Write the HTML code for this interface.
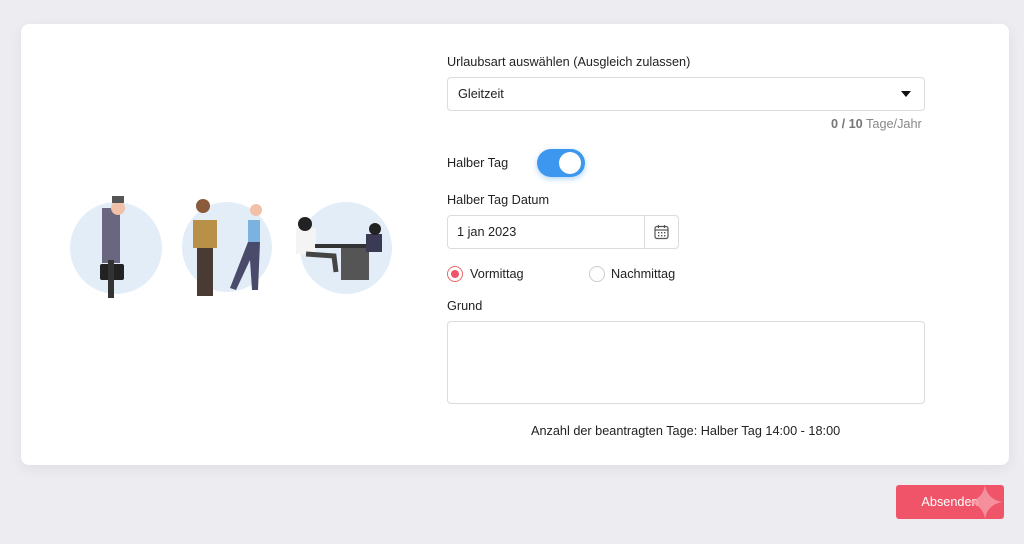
<!DOCTYPE html>
<html><head><meta charset="utf-8"><style>
*{box-sizing:border-box;margin:0;padding:0}
body{width:1024px;height:544px;background:#ececf1;font-family:"Liberation Sans",sans-serif;color:#222;position:relative;overflow:hidden}
.card{position:absolute;left:21px;top:24px;width:988px;height:441px;background:#fff;border-radius:8px;box-shadow:0 4px 14px rgba(0,0,0,.06)}
.t{position:absolute;font-size:12.7px;color:#222}
.box{position:absolute;border:1px solid #dcdcdc;border-radius:4px;background:#fff}
.btn{position:absolute;left:896px;top:485px;width:108px;height:34px;background:#ef5468;border-radius:3px;color:#fff;font-size:12.7px;text-align:center;line-height:34px;overflow:hidden}
</style></head><body>
<div class="card"></div>
<svg style="position:absolute;left:60px;top:180px" width="340" height="130">
<circle cx="56" cy="68" r="46" fill="#e3edf8"/>
<circle cx="167" cy="67" r="45" fill="#e3edf8"/>
<circle cx="286" cy="68" r="46" fill="#e3edf8"/>
<rect x="42" y="28" width="18" height="55" fill="#6a6680"/>
<circle cx="58" cy="28" r="7" fill="#f0c0a8"/>
<rect x="52" y="16" width="12" height="7" fill="#555"/>
<rect x="40" y="84" width="24" height="16" rx="2" fill="#222"/>
<rect x="48" y="80" width="6" height="38" fill="#333"/>
<rect x="133" y="40" width="24" height="28" fill="#b89048"/>
<circle cx="143" cy="26" r="7" fill="#8a5a3a"/>
<rect x="137" y="68" width="16" height="48" fill="#4a3a34"/>
<rect x="188" y="40" width="12" height="22" fill="#7ab2e0"/>
<circle cx="196" cy="30" r="6" fill="#f0c0a8"/>
<path d="M188 62 L200 62 L198 110 L192 110 L190 80 L176 110 L170 108 Z" fill="#4a4a6a"/>
<rect x="236" y="48" width="20" height="26" fill="#f4f4f4"/>
<circle cx="245" cy="44" r="7" fill="#222"/>
<rect x="255" y="64" width="60" height="4" fill="#333"/>
<rect x="281" y="68" width="28" height="32" fill="#555"/>
<rect x="306" y="54" width="16" height="18" fill="#3a3a55"/>
<circle cx="315" cy="49" r="6" fill="#222"/>
<path d="M246 74 L274 76 L276 92" stroke="#444" stroke-width="5" fill="none"/>
</svg>
<div class="t" style="left:447px;top:55px">Urlaubsart auswählen (Ausgleich zulassen)</div>
<div class="box" style="left:447px;top:77px;width:478px;height:34px"></div>
<div class="t" style="left:458px;top:87px">Gleitzeit</div>
<div style="position:absolute;left:901px;top:91px;width:0;height:0;border-left:5px solid transparent;border-right:5px solid transparent;border-top:6px solid #111"></div>
<div class="t" style="left:831px;top:117px;color:#888"><b style="color:#777">0 / 10</b> Tage/Jahr</div>
<div class="t" style="left:447px;top:156px">Halber Tag</div>
<div style="position:absolute;left:537px;top:149px;width:48px;height:28px;border-radius:14px;background:#3d97ee;box-shadow:0 2px 6px rgba(61,151,238,.4)"></div>
<div style="position:absolute;left:559px;top:152px;width:22px;height:22px;border-radius:11px;background:#fff"></div>
<div class="t" style="left:447px;top:193px">Halber Tag Datum</div>
<div class="box" style="left:447px;top:215px;width:232px;height:34px"></div>
<div style="position:absolute;left:644px;top:216px;width:1px;height:32px;background:#dcdcdc"></div>
<svg style="position:absolute;left:654px;top:224px" width="15" height="16" viewBox="0 0 15 16"><rect x="1" y="2.5" width="13" height="12" rx="2" fill="none" stroke="#555" stroke-width="1.2"/><line x1="1" y1="6" x2="14" y2="6" stroke="#555" stroke-width="1.2"/><line x1="4.5" y1="1" x2="4.5" y2="4" stroke="#555" stroke-width="1.2"/><line x1="10.5" y1="1" x2="10.5" y2="4" stroke="#555" stroke-width="1.2"/><g fill="#555"><rect x="4" y="8" width="1.4" height="1.4"/><rect x="7" y="8" width="1.4" height="1.4"/><rect x="10" y="8" width="1.4" height="1.4"/><rect x="4" y="11" width="1.4" height="1.4"/><rect x="7" y="11" width="1.4" height="1.4"/><rect x="10" y="11" width="1.4" height="1.4"/></g></svg>
<div class="t" style="left:457px;top:225px">1 jan 2023</div>
<div style="position:absolute;left:447px;top:266px;width:16px;height:16px;border-radius:8px;border:1px solid #e66;background:#fff"></div>
<div style="position:absolute;left:451px;top:270px;width:8px;height:8px;border-radius:4px;background:#ef5468"></div>
<div class="t" style="left:470px;top:267px">Vormittag</div>
<div style="position:absolute;left:589px;top:266px;width:16px;height:16px;border-radius:8px;border:1px solid #ccc"></div>
<div class="t" style="left:611px;top:267px">Nachmittag</div>
<div class="t" style="left:447px;top:299px">Grund</div>
<div class="box" style="left:447px;top:321px;width:478px;height:83px"></div>
<div class="t" style="left:531px;top:424px">Anzahl der beantragten Tage: Halber Tag 14:00 - 18:00</div>
<div class="btn">Absenden<svg style="position:absolute;left:74px;top:0" width="34" height="34" viewBox="0 0 34 34"><path d="M15 0 Q17 14 32 17 Q17 20 15 34 Q13 20 -2 17 Q13 14 15 0Z" fill="#f79aa6" fill-opacity=".85"/></svg></div>
</body></html>
